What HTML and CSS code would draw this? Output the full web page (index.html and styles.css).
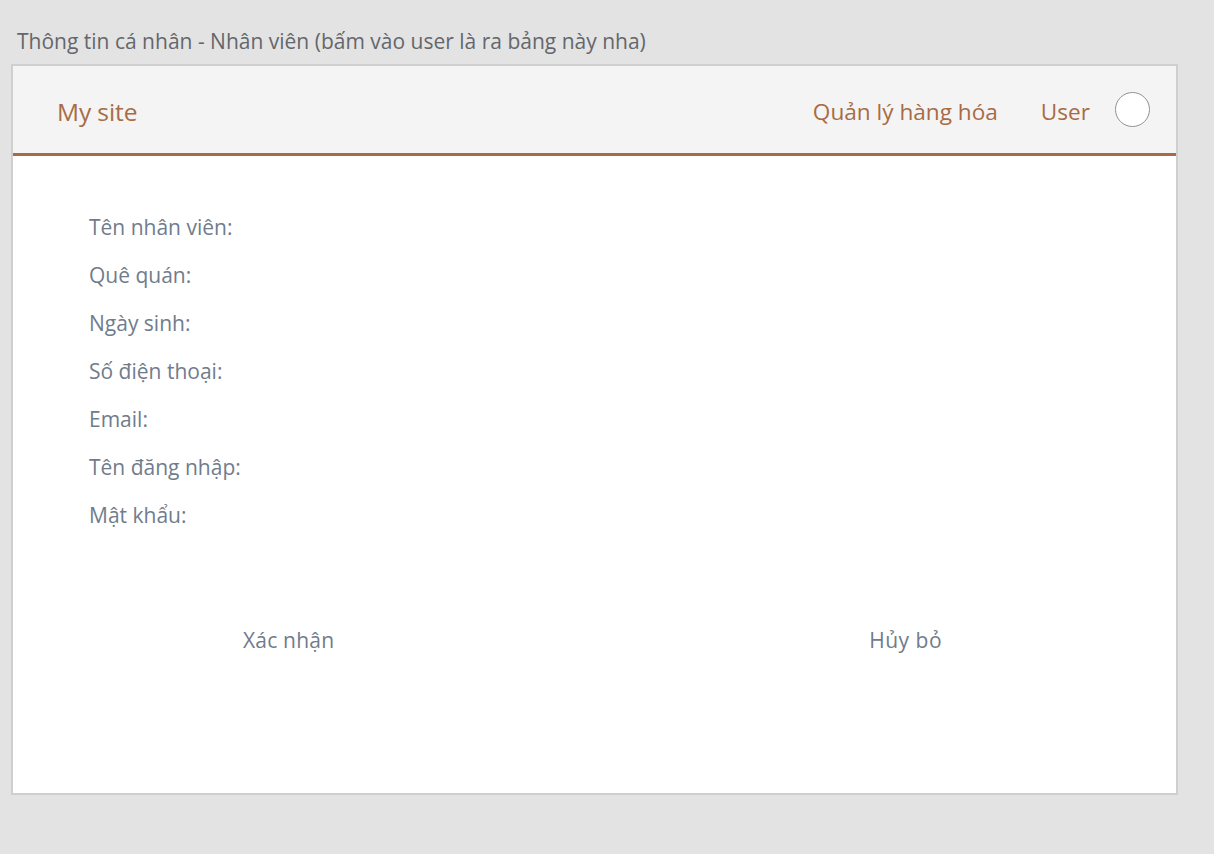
FILE: index.html
```html
<!DOCTYPE html>
<html lang="vi">
<head>
<meta charset="utf-8">
<title>Thông tin cá nhân</title>
<link rel="stylesheet" href="styles.css">
</head>
<body>
<div class="page-title">Thông tin cá nhân - Nhân viên (bấm vào user là ra bảng này nha)</div>
<div class="frame">
  <header class="topbar">
    <div class="brand">My site</div>
    <nav class="nav">
      <span class="nav-link">Quản lý hàng hóa</span>
      <span class="nav-link">User</span>
      <span class="avatar"></span>
    </nav>
  </header>
  <main class="content">
    <ul class="fields">
      <li>Tên nhân viên:</li>
      <li>Quê quán:</li>
      <li>Ngày sinh:</li>
      <li>Số điện thoại:</li>
      <li>Email:</li>
      <li>Tên đăng nhập:</li>
      <li>Mật khẩu:</li>
    </ul>
    <div class="actions">
      <span class="action action-ok">Xác nhận</span>
      <span class="action action-cancel">Hủy bỏ</span>
    </div>
  </main>
</div>
</body>
</html>
```
FILE: styles.css
```css
html, body {
  margin: 0;
  padding: 0;
  background: #e3e3e3;
  font-family: "Open Sans", "Noto Sans", sans-serif;
}
body {
  padding: 26px 0 0 11px;
}
.page-title {
  padding-left: 6px;
  font-size: 21px;
  line-height: 30px;
  color: #63676b;
  margin-bottom: 8px;
}
.frame {
  width: 1163px;
  height: 727px;
  border: 2px solid #cfcfcf;
  background: #ffffff;
  display: flex;
  flex-direction: column;
}
.topbar {
  background: #f4f4f4;
  border-bottom: 3px solid #a86b45;
  display: flex;
  align-items: center;
  justify-content: space-between;
  padding: 3px 26px 0 44px;
  box-sizing: border-box;
  height: 90px;
  color: #a86b45;
}
.brand {
  font-size: 24.5px;
  letter-spacing: -0.1px;
}
.nav {
  display: flex;
  align-items: center;
}
.nav-link {
  font-size: 22.6px;
  margin-right: 43px;
}
.nav-link + .nav-link {
  margin-right: 25px;
}
.avatar {
  width: 33px;
  height: 33px;
  border: 1px solid #929292;
  border-radius: 50%;
  background: #ffffff;
  margin-top: -4px;
}
.content {
  flex: 1;
  padding: 47px 0 0 76px;
}
.fields {
  list-style: none;
  margin: 0;
  padding: 0;
  color: #707c8c;
  font-size: 21px;
}
.fields li {
  height: 48px;
  line-height: 48px;
}
.actions {
  display: flex;
  margin-top: 87px;
  color: #707c8c;
  font-size: 21px;
}
.action-ok {
  margin-left: 154px;
  letter-spacing: 0.2px;
}
.action-cancel {
  margin-left: 535px;
  letter-spacing: 0.5px;
}
```
